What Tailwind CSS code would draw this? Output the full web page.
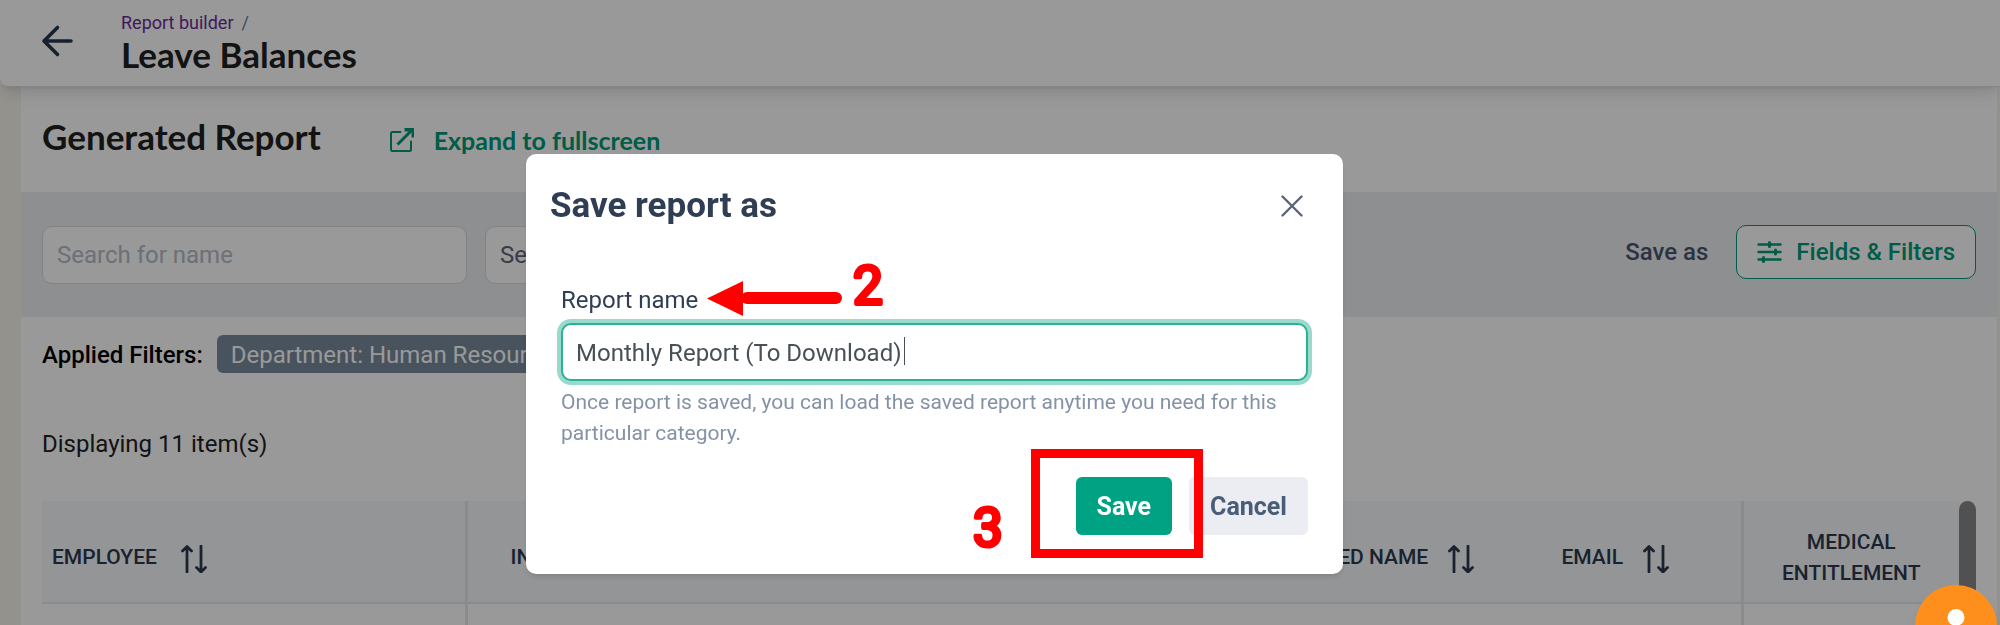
<!DOCTYPE html>
<html lang="en">
<head>
  <meta charset="UTF-8">
  <meta name="viewport" content="width=device-width, initial-scale=1.0">
  <title>Leave Balances</title>
  <script src="https://cdn.jsdelivr.net/npm/@tailwindcss/browser@4"></script>
</head>
<body class="flex h-screen flex-col overflow-hidden bg-[#f7f4ec] font-['Roboto',sans-serif] text-[#212121]">

  <!-- Icons -->
  <svg class="hidden">
    <symbol id="sort" viewBox="0 0 26 28">
      <path d="M6 27V2.500M1.500 6L6 1.500 10.500 6M20 1v25.500M15.500 22.500L20 27l4.500-4.500" fill="none" stroke="currentColor" stroke-width="2.800" stroke-linecap="round" stroke-linejoin="round"/>
    </symbol>
  </svg>

  <!-- Header -->
  <header class="relative flex h-[87px] shrink-0 items-center rounded-bl-lg border-b border-[#dcdcdc] bg-white pl-10 shadow-lg">
    <a href="#" aria-label="Back" class="mr-[47px] block pb-1 text-[#27384d]">
      <svg width="34" height="34" viewBox="0 0 34 34" fill="none" stroke="currentColor" stroke-width="3.600" stroke-linecap="round" stroke-linejoin="round"><path d="M31 17H4M17.500 3.500L4 17l13.500 13.500"/></svg>
    </a>
    <div class="pb-[3px]">
      <nav class="flex gap-2 pt-px text-lg leading-6 text-[#6b7f94]">
        <a href="#" class="text-[#6b2a9b]">Report builder</a><span>/</span>
      </nav>
      <h1 class="font-['Lato',sans-serif] text-[35px] leading-[38px] font-bold">Leave Balances</h1>
    </div>
  </header>

  <!-- Report -->
  <main class="mr-[3px] ml-[21px] min-h-0 grow overflow-hidden bg-white">
    <div class="flex h-[105px] items-center gap-[69px] px-[21px] pb-[7px]">
      <h2 class="font-['Lato',sans-serif] text-[35px] leading-10 font-bold">Generated Report</h2>
      <a href="#" class="flex items-center gap-5 pt-2 font-['Lato',sans-serif] text-[25px] leading-8 font-bold text-[#009977]">
        <svg width="24" height="24" viewBox="0 0 24 24" fill="none" stroke="currentColor" stroke-width="2"><path d="M10.500 4H2.500Q1 4 1 5.500v16Q1 23 2.500 23h17q1.500 0 1.500-1.500V13.500" stroke-linecap="round"/><path d="M7.500 16.500L22 2" stroke-width="3"/><path d="M14.500 0H24v9.500h-2.500V3.500h-7z" fill="currentColor" stroke="none"/></svg>
        Expand to fullscreen
      </a>
    </div>

    <div class="flex h-[125px] items-center justify-between bg-[#edeff2] px-[21px]">
      <div class="flex gap-[18px]">
        <input type="text" aria-label="Search for name" placeholder="Search for name" class="h-[58px] w-[425px] rounded-[10px] border border-[#d5d9e0] bg-white px-[14px] pt-px text-2xl placeholder:text-[#b4bbc6]">
        <select aria-label="Select" class="h-[58px] w-[425px] appearance-none rounded-[10px] border border-[#d5d9e0] bg-white px-[14px] pt-px text-2xl text-[#5a6676]">
          <option>Select</option>
        </select>
      </div>
      <div class="flex items-center gap-7 pb-[5px]">
        <button type="button" class="text-2xl font-medium text-[#495671]">Save as</button>
        <button type="button" class="flex h-[54px] items-center gap-[14px] rounded-[10px] border border-[#009977] bg-white px-5 text-2xl font-medium text-[#009977]">
          <svg width="25" height="22" viewBox="0 0 25 22" fill="none" stroke="currentColor" stroke-width="2.400"><path d="M1.500 3.500h22M1.500 11h22M1.500 18.500h22" stroke-linecap="round"/><path d="M12.500 1.500v4M18.500 9v4M6.500 16.500v4" stroke-width="3" stroke-linecap="round"/></svg>
          Fields &amp; Filters
        </button>
      </div>
    </div>

    <div class="px-[21px] pt-[18px]">
      <div class="flex items-center gap-[14px] text-2xl">
        <span class="pt-px font-medium text-black">Applied Filters:</span>
        <span class="rounded-md bg-[#788a9d] px-[14px] pt-[4px] pb-[2px] text-white">Department: Human Resources</span>
      </div>
      <p class="mt-[55px] text-2xl">Displaying 11 item(s)</p>

      <div class="mt-[41px] flex items-start">
        <table class="grow table-fixed border-collapse text-[21px] text-[#2c3a4f]">
          <thead>
            <tr class="h-[102px] border-b-2 border-[#e5e8ed] bg-[#f7f9fb]">
              <th class="w-[424px] border-r-3 border-[#e5e8ed] px-[10px] pt-3 font-medium">
                <span class="flex items-center gap-6">EMPLOYEE <svg class="mt-[2px] h-7 w-[26px]"><use href="#sort"/></svg></span>
              </th>
              <th class="px-[43px] pt-3 font-medium">
                <span class="flex items-center gap-5">INITIALS <svg class="mt-[2px] h-7 w-[26px]"><use href="#sort"/></svg></span>
              </th>
              <th class="w-[256px] pt-3 font-medium whitespace-nowrap">
                <span class="flex items-center justify-center gap-5">PREFERRED NAME <svg class="mt-[2px] h-7 w-[26px]"><use href="#sort"/></svg></span>
              </th>
              <th class="w-[252px] border-r-3 border-[#e5e8ed] pt-3 font-medium">
                <span class="flex items-center justify-center gap-5">EMAIL <svg class="mt-[2px] h-7 w-[26px]"><use href="#sort"/></svg></span>
              </th>
              <th class="w-[217px] px-8 pt-3 leading-[31px] font-medium">MEDICAL ENTITLEMENT</th>
            </tr>
          </thead>
          <tbody>
            <tr class="h-[60px]">
              <td class="border-r-3 border-[#e5e8ed]"></td>
              <td></td>
              <td></td>
              <td class="border-r-3 border-[#e5e8ed]"></td>
              <td></td>
            </tr>
          </tbody>
        </table>
        <div class="h-40 w-[17px] rounded-full bg-[#888]"></div>
      </div>
    </div>
  </main>

  <!-- Save dialog -->
  <div class="fixed inset-0 flex items-start justify-center overflow-hidden bg-black/40 pt-[154px] pr-[131px]">
    <div role="dialog" aria-labelledby="dialogTitle" class="relative w-[817px] rounded-[10px] bg-white px-6 pt-8 pb-[39px] shadow-md">
      <div class="flex items-center justify-between pr-4">
        <h2 id="dialogTitle" class="text-[35px] leading-10 font-bold text-[#2f3e54]">Save report as</h2>
        <button type="button" aria-label="Close" class="text-[#5b6577]">
          <svg width="22" height="22" viewBox="0 0 22 22" fill="none" stroke="currentColor" stroke-width="2.400" stroke-linecap="round"><path d="M1.500 1.500l19 19M20.500 1.500l-19 19"/></svg>
        </button>
      </div>
      <form class="px-[11px] pt-[58px]">
        <label for="reportName" class="block text-2xl text-[#2f3e54]">Report name</label>
        <div class="relative mt-[7px]">
          <input type="text" id="reportName" value="Monthly Report (To Download)" class="h-[58px] w-full rounded-[10px] border-2 border-[#2bb196] bg-white px-[13px] pt-px text-2xl text-[#495057] ring-4 ring-[#99dacd] outline-none">
          <span class="absolute top-[14px] left-[343px] h-7 w-px bg-[#495057]"></span>
        </div>
        <p class="mt-[6px] text-[21px] leading-[31px] text-[#8492a6]">Once report is saved, you can load the saved report anytime you need for this particular category.</p>
        <div class="mt-7 flex justify-end gap-[17px] font-bold">
          <button type="button" class="h-[58px] rounded-md bg-[#00a284] px-[21px] pt-px text-[25px] text-white">Save</button>
          <button type="button" class="h-[58px] rounded-md bg-[#ebedf2] px-[21px] pt-px text-[25px] text-[#495d78]">Cancel</button>
        </div>
      </form>

      <!-- Step markers -->
      <svg class="absolute top-[100px] left-[181px]" width="190" height="70" viewBox="0 0 190 70" fill="#f00">
        <path d="M0 44.500L36 27v35z"/>
        <rect x="34" y="38" width="101" height="12" rx="6"/>
        <text x="146" y="50" font-size="53" stroke="#f00" stroke-width="4" stroke-linejoin="round">2</text>
      </svg>
      <svg class="absolute top-[340px] left-[440px]" width="60" height="70" viewBox="0 0 60 70" fill="#f00">
        <text x="7" y="52" font-size="53" stroke="#f00" stroke-width="4" stroke-linejoin="round">3</text>
      </svg>
      <div class="pointer-events-none absolute top-[295px] left-[505px] h-[109px] w-[172px] border-9 border-[#f00]"></div>
    </div>
  </div>

  <!-- Help bubble -->
  <button type="button" aria-label="Help" class="fixed right-[3px] -bottom-[42px] flex size-[82px] justify-center rounded-full bg-[#ff8f1c] pt-6 shadow-lg">
    <svg width="34" height="40" viewBox="0 0 34 40" fill="#fff"><circle cx="17" cy="8.500" r="8.500"/><path d="M2 38c0-12 6-18 15-18s15 6 15 18z"/></svg>
  </button>

</body>
</html>
